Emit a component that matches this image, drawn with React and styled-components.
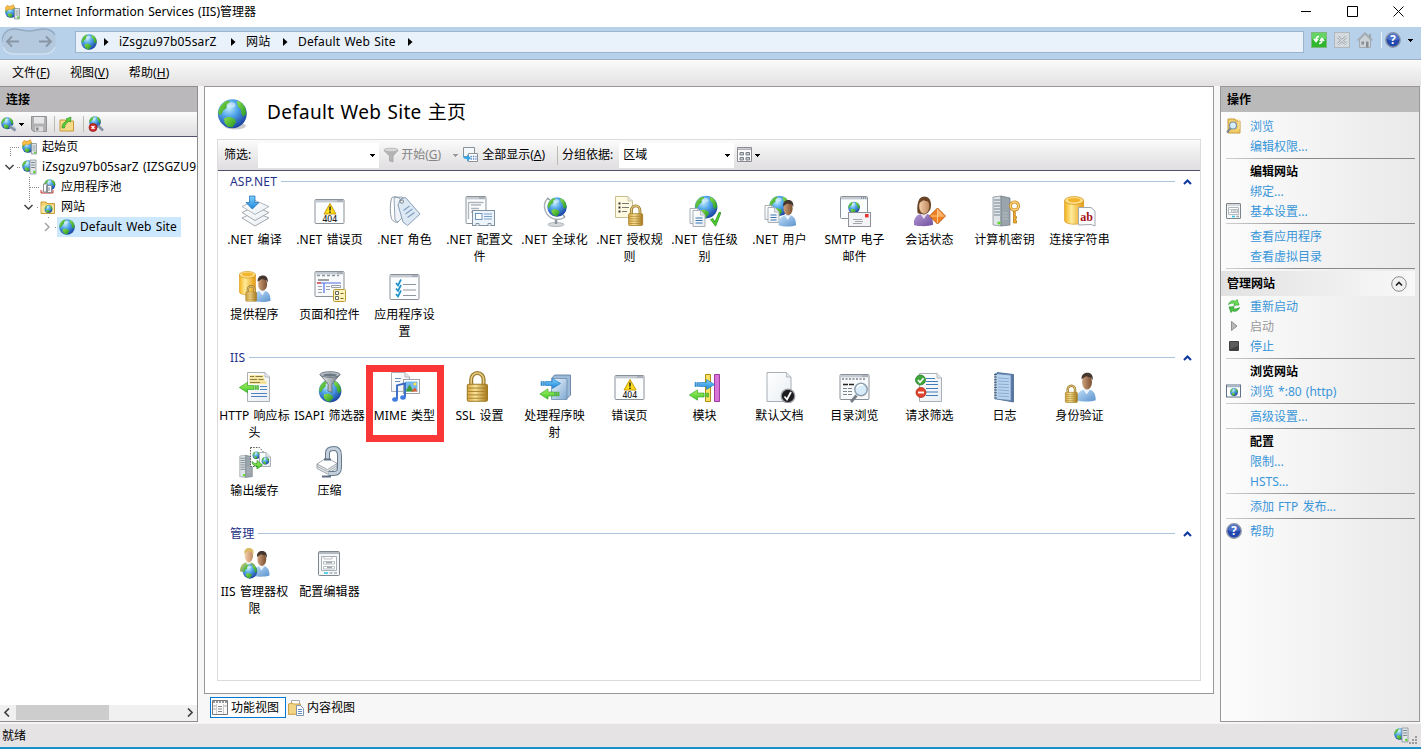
import styled, { createGlobalStyle } from "styled-components"

const GlobalStyle = createGlobalStyle`
    * { box-sizing: border-box; }
    html, body, #root { height: 100%; }
    body {
        margin: 0;
        overflow: hidden;
        background: #f7f7f7;
        color: #000;
        font: 12px/20px "Noto Sans", "Noto Sans CJK SC", sans-serif;
        word-spacing: 1px;
        white-space: nowrap;
        cursor: default;
    }
    svg { display: block; flex: none; }
`

// SHARED DRAWING PARTS
const Defs = () => (
    <svg width="0" height="0">
        <defs>
            <radialGradient id="sea" cx="38%" cy="30%" r="75%">
                <stop offset="0" stopColor="#c4edfd" />
                <stop offset=".4" stopColor="#52a6ea" />
                <stop offset="1" stopColor="#163c9c" />
            </radialGradient>
            <linearGradient id="land" x1="0" y1="0" x2="1" y2="1">
                <stop offset="0" stopColor="#8fe04a" />
                <stop offset="1" stopColor="#1f9425" />
            </linearGradient>
            <linearGradient id="gold">
                <stop offset="0" stopColor="#d9aa45" />
                <stop offset=".4" stopColor="#f8e29a" />
                <stop offset="1" stopColor="#a8781b" />
            </linearGradient>
            <linearGradient id="tank">
                <stop offset="0" stopColor="#f3b21c" />
                <stop offset=".35" stopColor="#ffeb9a" />
                <stop offset="1" stopColor="#e69a0c" />
            </linearGradient>
            <linearGradient id="blueShirt" x1="0" y1="0" x2="1" y2="1">
                <stop offset="0" stopColor="#c2e0f9" />
                <stop offset="1" stopColor="#5b93cd" />
            </linearGradient>
            <linearGradient id="skin">
                <stop offset="0" stopColor="#cfa27c" />
                <stop offset="1" stopColor="#7a4f30" />
            </linearGradient>
            <linearGradient id="fair">
                <stop offset="0" stopColor="#f3d0ac" />
                <stop offset="1" stopColor="#c08a60" />
            </linearGradient>
            <linearGradient id="purple" x1="0" y1="0" x2="1" y2="1">
                <stop offset="0" stopColor="#b79ad6" />
                <stop offset="1" stopColor="#6f519f" />
            </linearGradient>
            <linearGradient id="greenShirt" x1="0" y1="0" x2="1" y2="1">
                <stop offset="0" stopColor="#b5d385" />
                <stop offset="1" stopColor="#5d8a35" />
            </linearGradient>
            <linearGradient id="steel">
                <stop offset="0" stopColor="#f2f5f7" />
                <stop offset="1" stopColor="#6d7780" />
            </linearGradient>
            <linearGradient id="paper" x1="0" y1="0" x2="1" y2="1">
                <stop offset="0" stopColor="#fff" />
                <stop offset="1" stopColor="#e9eef3" />
            </linearGradient>
            <linearGradient id="arrowBlue" x1="0" y1="0" x2="0" y2="1">
                <stop offset="0" stopColor="#7fd0fb" />
                <stop offset="1" stopColor="#1c86da" />
            </linearGradient>
            <linearGradient id="arrowGreen" x1="0" y1="0" x2="0" y2="1">
                <stop offset="0" stopColor="#a4ef62" />
                <stop offset="1" stopColor="#43c92c" />
            </linearGradient>
            <linearGradient id="box" x1="0" y1="0" x2="1" y2="1">
                <stop offset="0" stopColor="#eef6fc" />
                <stop offset="1" stopColor="#7fa9d2" />
            </linearGradient>
        </defs>
    </svg>
)

const At = ({ x = 0, y = 0, s = 1, children }) => (
    <g transform={`translate(${x} ${y}) scale(${s})`}>{children}</g>
)

// unit globe, 16 wide
const GlobeShape = () => (
    <>
        <circle cx="8" cy="8" r="7.8" fill="url(#sea)" />
        <path d="M1.6 3.8 4 1.3 6.4.8 6.6 2 5 3.2 4.8 5 3 6.2 2.4 8 1 8.8.4 7z" fill="url(#land)" />
        <path d="M10.4 1 12.8 1.8 15 4.6 15.6 8 14 9.6 12.9 8 12.6 5.6 11 4z" fill="url(#land)" />
        <path d="M3.6 10.4 6.6 9.6 9.6 11 10 12.6 8 15.4 5.4 14.8 3.8 12.8z" fill="url(#land)" />
        <ellipse cx="7.4" cy="3.2" rx="2.4" ry="1.4" fill="#fff" opacity=".45" />
    </>
)

const PadlockShape = () => (
    <>
        <path d="M4 9V5.5a4 4.2 0 0 1 8 0V9" fill="none" stroke="#9b7a2c" strokeWidth="2.6" />
        <path d="M4 9V5.5a4 4.2 0 0 1 8 0V9" fill="none" stroke="#e6cf86" strokeWidth="1" />
        <rect x="1.5" y="8.5" width="13" height="11" rx="1" fill="url(#gold)" stroke="#a07a22" strokeWidth=".7" />
        <path d="M2 11h12M2 13.2h12M2 15.4h12M2 17.6h12" stroke="#a87f25" strokeWidth=".6" />
    </>
)

// bust, 17 wide and 26 high
const PersonShape = ({ shirt = "blueShirt", face = "skin", hair = "#453630", long }) => (
    <>
        <path d="M0 25c0-6 3-9 7-9.6h4c4 .6 6 3.6 6 9.6-4 1.6-13 1.6-17 0z" fill={`url(#${shirt})`} />
        <path d="m6 15.5 3 4.5 3-4.5z" fill="#fff" opacity=".8" />
        {long && <path d="M3.6 15C2.6 9 3.6 1 9 .6c6 0 7 6 5.8 10.4-1 3-4 5-6 5z" fill={hair} />}
        <ellipse cx="9.3" cy="8.8" rx="4.4" ry="6.6" fill={`url(#${face})`} />
        <path d="M4.5 6.5C4.2 2.6 6.4.6 9.6.6c3.4 0 5.2 2.2 4.8 6.8L12.9 5 8.5 3.8z" fill={hair} />
    </>
)

const WindowShape = ({ w = 30, h = 25, fill = "#fcfdfe" }) => (
    <>
        <rect x=".5" y=".5" width={w - 1} height={h - 1} rx="1" fill={fill} stroke="#8b9198" />
        <path d={`M1 2.2H${w - 1}`} stroke="#c3cad1" strokeWidth="2.4" />
        <path d={`M${w - 7} 2h5`} stroke="#5d6670" strokeWidth="1" strokeDasharray="1 1" />
    </>
)

const PageShape = ({ w = 18, h = 24, lines = 0, fill = "url(#paper)", stroke = "#a9afb5", ink = "#3b76b5" }) => (
    <>
        <path d={`M.5.5H${w - 5}L${w - .5} 5V${h - .5}H.5z`} fill={fill} stroke={stroke} />
        <path d={`M${w - 5} .5V5H${w - .5}`} fill="#e4e8ec" stroke={stroke} strokeWidth=".8" />
        {Array.from({ length: lines }, (_, i) => (
            <path key={i} d={`M3 ${8 + i * 2.5}H${w - 3}`} stroke={ink} strokeWidth="1" />
        ))}
    </>
)

const TankShape = () => (
    <>
        <path d="M1 5v20c0 5 19 5 19 0V5z" fill="url(#tank)" stroke="#d08c10" strokeWidth=".6" />
        <ellipse cx="10.5" cy="5" rx="9.5" ry="3.9" fill="#ffe08a" stroke="#d08c10" strokeWidth=".7" />
        <ellipse cx="10.5" cy="4.6" rx="6.5" ry="2.2" fill="#f3b52e" />
    </>
)

const ServerShape = () => (
    <>
        <path d="M1 2 9 1 9 31 1 30z" fill="#dfe5e9" stroke="#7b858d" strokeWidth=".7" />
        <path d="M9 1 18 3V30L9 31z" fill="#9aa4ac" stroke="#6b757d" strokeWidth=".7" />
        <path d="M2 5h6M2 8h6M2 11h6M2 14h6M2 17h6M2 20h6" stroke="#77838c" strokeWidth="1.2" />
        <path d="M11 18h5M11 21h5M11 24h5" stroke="#d5dbdf" strokeWidth=".8" strokeDasharray="1 .7" />
        <circle cx="7" cy="28" r="1.6" fill="#5ddc27" />
    </>
)

const ArrowRight = () => (
    <path d="M4.5 3.5h7V.5l8 5-8 5v-3h-7zM0 3.5h1.2v4H0zM2.2 3.5h1.2v4H2.2z" fill="url(#arrowBlue)" stroke="#1273c0" strokeWidth=".6" />
)
const ArrowLeft = () => (
    <path d="M15 3.5H8.5V.3L.3 5.5l8.2 5.2V7.5H15zM19.5 3.5h-1.2v4h1.2zM17.3 3.5h-1.2v4h1.2z" fill="url(#arrowGreen)" stroke="#2fa022" strokeWidth=".6" />
)

const Warning404 = () => (
    <>
        <At x={.5} y={4}><WindowShape /></At>
        <path d="M16 8.5 22 19H10z" fill="#ffdc1c" stroke="#c79a08" strokeWidth="1" strokeLinejoin="round" />
        <path d="M16 11.5v4M16 16.6v1.4" stroke="#222" strokeWidth="1.5" />
        <text x="15.8" y="27" textAnchor="middle" fontSize="8.5" fontWeight="500" fill="#222">404</text>
    </>
)

// FEATURE DRAWINGS, 32 x 32
const drawings = {
    compile: (
        <>
            <path d="m3 23 13-6 14 6-14 8z" fill="url(#paper)" stroke="#8d949b" strokeWidth=".8" />
            <path d="m3 17.5 13-6 14 6-14 8z" fill="url(#paper)" stroke="#8d949b" strokeWidth=".8" />
            <path d="m3 11.5 13-6 14 6-14 8z" fill="url(#paper)" stroke="#9da4ab" strokeWidth=".8" />
            <path d="M10.5 1h5.5v6.5h4L13.3 14 7 7.5h3.5z" fill="url(#arrowBlue)" stroke="#1268b5" strokeWidth=".7" />
        </>
    ),
    error: <Warning404 />,
    roles: (
        <>
            <path d="M3 2.5C1 6 .5 20 3 24.5c1 2 4 3 6 3" fill="none" stroke="#8a98a6" strokeWidth="1" />
            <path d="m5 2.5 8-.5 6 4-5 16-5 5-3-2z" fill="#eef4fa" stroke="#8a9bad" strokeWidth=".9" />
            <path d="m9 10 2.5-6 5-1.5L31 19 18.5 30.5 14 27z" fill="#dce9f5" stroke="#7e93a9" strokeWidth=".9" />
            <path d="m14.5 15.5 6-4.5M16.5 19l7-5M18.5 22.5l7-5" stroke="#7d9dbd" strokeWidth="1.1" />
            <circle cx="12.8" cy="6.5" r="1.7" fill="#fff" stroke="#566" strokeWidth=".8" />
            <path d="M3 2.5c4-2 8 0 10 4" fill="none" stroke="#8a98a6" strokeWidth=".9" />
        </>
    ),
    config: (
        <>
            <At x={1.5} y={1}><WindowShape w={21} h={28} /></At>
            <path d="M4.5 7.5h15M4.5 7v17M7 10h10M7 13.5h8M7 17h3" stroke="#adb5bc" strokeWidth="1.3" />
            <rect x="8.5" y="15.5" width="22" height="15" fill="#edf4fb" stroke="#8292a3" />
            <rect x="11.5" y="18.5" width="6.5" height="6" fill="#fff" stroke="#6894c4" />
            <path d="M20 19h8M20 21.5h8M20 24h8" stroke="#79a0ca" />
            <path d="M12 30.5v-2h3v2m9 0v-2h3v2" fill="#fff" stroke="#8292a3" />
        </>
    ),
    globalize: (
        <>
            <ellipse cx="17" cy="29.5" rx="8" ry="2" fill="#d5dade" stroke="#8b949b" strokeWidth=".6" />
            <path d="M17 24v5" stroke="#8b949b" strokeWidth="2.4" />
            <path d="M9 3C2 10 6 24 19 24.5c3 0 5-1 7-2.5" fill="none" stroke="#a9b2b9" strokeWidth="1.4" />
            <path d="m8 3 3 2M26 22l-2-2" stroke="#8b949b" strokeWidth="1.4" />
            <At x={8} y={2} s={1.25}><GlobeShape /></At>
        </>
    ),
    authorize: (
        <>
            <At x={1} y={1}><PageShape w={18} h={22} fill="#fff9e0" stroke="#c9bd95" /></At>
            <path d="M4.5 8.5h2M4.5 12.5h2M4.5 16.5h2" stroke="#333" strokeWidth="1.8" />
            <path d="M8 8.5h7M8 12.5h7M8 16.5h5" stroke="#787878" strokeWidth="1.2" />
            <At x={13} y={9.5} s={1.08}><PadlockShape /></At>
        </>
    ),
    trust: (
        <>
            <At x={5.5} y={.5} s={1.45}><GlobeShape /></At>
            <At x={.5} y={13}><PageShape w={13} h={16} /></At>
            <At x={3.5} y={15}><PageShape w={13} h={17} lines={3} /></At>
            <path d="m21.5 24.5 2.5-1 1.8 3.6L30 17.4l2 .2L26.6 31.200z" fill="#4bd02c" stroke="#238915" strokeWidth=".7" />
        </>
    ),
    users: (
        <>
            <At x={5} y={.5} s={1.3}><GlobeShape /></At>
            <At x={.5} y={10}><PageShape w={12} h={15} /></At>
            <At x={3.5} y={12}><PageShape w={12} h={16} lines={3} /></At>
            <At x={14.5} y={4.5} s={1.03}><PersonShape /></At>
        </>
    ),
    smtp: (
        <>
            <At x={1} y={1}><WindowShape w={28} h={23} /></At>
            <At x={9} y={6.5} s={.75}><GlobeShape /></At>
            <rect x="9.5" y="17.5" width="22" height="14" fill="#f4f4f6" stroke="#8e9297" />
            <rect x="26" y="19" width="3.6" height="3.4" fill="#e43434" />
            <path d="M14 24.5h9M16 26.5h8M14 28.5h9" stroke="#a2a6ab" />
        </>
    ),
    session: (
        <>
            <At x={-.5} y={1} s={1.15}><PersonShape shirt="purple" face="fair" hair="#6b4426" long /></At>
            <path d="m23.5 13 8 8-8 8-8-8z" fill="#f08120" stroke="#b4560b" strokeWidth=".9" />
            <path d="M23.5 14v14M16.5 21h14" stroke="#ffd09a" strokeWidth=".9" />
            <path d="m24 14.5 6 6h-6z" fill="#ffb469" />
        </>
    ),
    machineKey: (
        <>
            <At x={3} y={0}><ServerShape /></At>
            <path d="M24.5 15v13h3v-2.4h-1.2v-2h1.2v-2h-1.2V15z" fill="#f0ae35" stroke="#b97b13" strokeWidth=".8" />
            <circle cx="25.5" cy="11" r="4" fill="none" stroke="#c98a1c" strokeWidth="3" />
            <circle cx="25.5" cy="11" r="4" fill="none" stroke="#ffd680" strokeWidth="1.4" />
        </>
    ),
    connString: (
        <>
            <At x={-.4} y={.5}><TankShape /></At>
            <path d="M14.5 12.5h12.5l4 3.5v15l-4-1.5-12.5.5z" fill="#fff" stroke="#a3a8ad" />
            <text x="22.5" y="25.5" textAnchor="middle" fontSize="12" fontWeight="700" fontFamily="Liberation Serif, serif" fill="#a51218">ab</text>
        </>
    ),
    providers: (
        <>
            <At x={-.5} y={.5} s={.85}><TankShape /></At>
            <At x={14} y={5} s={1.03}><PersonShape /></At>
            <At x={5.5} y={15} s={.83}><PadlockShape /></At>
        </>
    ),
    pages: (
        <>
            <At x={.5} y={1}><WindowShape h={26} fill="#f8fafc" /></At>
            <path d="M3 5.5h22" stroke="#8c9299" strokeDasharray="3 2" strokeWidth="1.6" />
            <path d="M4 10h11" stroke="#444" />
            <path d="M3 13h24M10 13v10" stroke="#4e6ee0" strokeWidth="1.2" />
            <path d="M3 13h4" stroke="#f04a3c" strokeWidth="1.4" />
            <path d="M4 16.5h4M4 19.5h4M4 22.5h4M12 16.5h4M12 19.5h4M17.5 15.5h9v2h-9z" fill="none" stroke="#9aa1a8" />
            <rect x="19.5" y="19.5" width="12" height="12" rx="1" fill="#fff3bd" stroke="#b99a32" />
            <path d="M21.5 21.5h3v3h-3zM21.5 26.5h3v3h-3z" fill="#fff" stroke="#555" strokeWidth=".9" />
            <path d="M26.5 23.5h3M26.5 28.5h3" stroke="#776320" />
        </>
    ),
    appSettings: (
        <>
            <At x={.5} y={4}><WindowShape h={26} /></At>
            <path d="M14 14.5h13M14 20h13M14 25.5h13" stroke="#8d959d" strokeWidth="1.2" />
            <path d="m7 13 2 2.4L12 9.5M7 18.5l2 2.4 3-5.9M7 24l2 2.4 3-5.9" fill="none" stroke="#1f92c9" strokeWidth="1.7" />
        </>
    ),
    headers: (
        <>
            <At x={8} y={1}><PageShape w={23} h={30} /></At>
            <path d="M10.5 5.5h14M10.5 8.5h15M10.5 11.5h17" stroke="#f3de84" strokeWidth="2.6" />
            <path d="M11 5.5h4M16.5 5.5h7M11 8.5h7M19.5 8.5h5M11 11.5h10" stroke="#6e6432" strokeWidth=".8" />
            <path d="M21 15.5h7M21 18.5h7M12 22.5h16M12 25.5h16" stroke="#4e83bd" strokeWidth="1" />
            <At x={0} y={11}><ArrowLeft /></At>
        </>
    ),
    isapi: (
        <>
            <At x={4.5} y={8.5} s={1.45}><GlobeShape /></At>
            <path d="M6 3.5 14 13v7l4 1.5V13l8-9.5z" fill="url(#steel)" stroke="#59636d" strokeWidth=".8" />
            <ellipse cx="16" cy="3.5" rx="10" ry="2.8" fill="#b9c2ca" stroke="#59636d" strokeWidth=".8" />
            <ellipse cx="16" cy="4" rx="7" ry="1.5" fill="#6c7781" />
        </>
    ),
    mime: (
        <>
            <At x={2} y={1}><PageShape w={19} h={20} /></At>
            <path d="M6 7.5h6M6 10.5h5" stroke="#6f90b2" />
            <rect x="14.5" y="8.500" width="16" height="14" fill="#fff" stroke="#9da3a9" />
            <rect x="16.5" y="10.5" width="12" height="10" fill="#74b9ee" />
            <path d="m16.5 20.5 4-7 4 7z" fill="#3d9a36" />
            <path d="m22 20.5 4-4 2.5 4z" fill="#e05b2b" />
            <circle cx="26" cy="13" r="1.6" fill="#ffe14b" />
            <path d="M8 28V14.5l8-2V26" fill="none" stroke="#2f63c4" strokeWidth="1.8" />
            <ellipse cx="6" cy="28.5" rx="2.8" ry="2.2" fill="#3f7de0" />
            <ellipse cx="14" cy="26.5" rx="2.8" ry="2.2" fill="#3f7de0" />
        </>
    ),
    ssl: <At x={1} y={0} s={1.55}><PadlockShape /></At>,
    handler: (
        <>
            <path d="m12.5 7.5 3-3.5h16v20l-4 4z" fill="#9dbbd9" stroke="#54779b" strokeWidth=".8" />
            <path d="M12.5 7.5H28v21H12.500z" fill="url(#box)" stroke="#6d8eb1" strokeWidth=".8" />
            <At x={2} y={7}><ArrowRight /></At>
            <At x={.5} y={17.5}><ArrowLeft /></At>
        </>
    ),
    modules: (
        <>
            <path d="M16.5 3.5h5v27h-5z" fill="#f7e263" stroke="#b08f12" />
            <path d="M25.5 3.5h5v27h-5z" fill="#d873d8" stroke="#9c3ba0" />
            <At x={6} y={8}><ArrowRight /></At>
            <At x={0} y={18.5}><ArrowLeft /></At>
        </>
    ),
    defaultDoc: (
        <>
            <At x={2.5} y={1}><PageShape w={25} h={30} /></At>
            <circle cx="24" cy="25" r="6.8" fill="#1d1d1f" stroke="#9a9da0" strokeWidth="1.3" />
            <path d="m20.5 25.5 2.5 3 4-7.5" fill="none" stroke="#fff" strokeWidth="1.8" />
        </>
    ),
    browse: (
        <>
            <At x={.5} y={3}><WindowShape h={26} fill="#f8f9fa" /></At>
            <path d="M3 8h24" stroke="#7b8289" strokeDasharray="2 1.5" strokeWidth="1.4" />
            <path d="M4 13.5h12" stroke="#222" strokeWidth="1.6" strokeDasharray="5 1" />
            <path d="M4 17.5h9M4 20.5h9M4 23.5h9" stroke="#7e858c" strokeDasharray="4 1" />
            <path d="m17.5 24.5-5.5 6.5" stroke="#777e85" strokeWidth="2.8" />
            <circle cx="22" cy="18.5" r="6.2" fill="#d6ecfb" stroke="#8fa0b0" strokeWidth="1.5" />
            <path d="M18 17a4.5 4.5 0 0 1 6-3" fill="none" stroke="#fff" strokeWidth="1.5" />
        </>
    ),
    filter: (
        <>
            <At x={5} y={2}><PageShape w={23} h={29} /></At>
            <path d="M12 7.5h9M12 10.5h12M12 13.5h12M12 17.5h12M12 21h12M12 24.5h12" stroke="#3f7dbd" strokeWidth="1.1" />
            <circle cx="6.5" cy="9" r="5" fill="#3fa63c" stroke="#237322" strokeWidth=".7" />
            <path d="m4 9 2 2.2 3.5-4" fill="none" stroke="#fff" strokeWidth="1.6" />
            <circle cx="7" cy="21.5" r="5" fill="#e2412b" stroke="#9f2414" strokeWidth=".7" />
            <path d="M4 21.5h6" stroke="#fff" strokeWidth="1.9" />
        </>
    ),
    log: (
        <>
            <path d="m8 1.5 16.5 2v27.5L8 28z" fill="#5577a3" stroke="#466690" strokeWidth=".8" />
            <path d="m6 2.5 16 1.5v25.5L6 28z" fill="#b9d2ee" stroke="#6487ae" strokeWidth=".8" />
            <path d="m9 7 11 .7M9 10l11 .7M9 13l11 .7M9 16l11 .7M9 19l11 .7M9 22l11 .7M9 25l11 .7" stroke="#86a9d0" strokeWidth=".9" />
            <path d="M6.5 3v24.5" stroke="#44556a" strokeWidth="2.6" strokeDasharray="1 1.6" />
        </>
    ),
    auth: (
        <>
            <At x={12.5} y={1} s={1.13}><PersonShape /></At>
            <At x={0} y={13.5} s={.92}><PadlockShape /></At>
        </>
    ),
    cache: (
        <>
            <At x={0} y={8.5} s={.74}><ServerShape /></At>
            <path d="M11.5 1.5h9l3.5 4v15H11.500z" fill="#fff" stroke="#555" strokeDasharray="1.5 1.2" />
            <At x={13.5} y={5.5} s={.48}><GlobeShape /></At>
            <At x={20} y={6}><PageShape w={12} h={15} /></At>
            <At x={22.5} y={11} s={.48}><GlobeShape /></At>
            <path d="M13 15.5c2 2 3 2 5 2v-3l5.5 4.5-5.5 4v-3c-3 0-5-1.500-5-4.500z" fill="url(#arrowGreen)" stroke="#258c1b" strokeWidth=".7" />
        </>
    ),
    compress: (
        <>
            <path d="M3 18v4.5L13.500 28 23 22v-4.500z" fill="#e3e7ea" stroke="#8e969d" strokeWidth=".8" />
            <path d="m3 20.200 10.500 5.500 9.500-6" fill="none" stroke="#8e969d" strokeWidth=".7" />
            <path d="m3 18 10-6.500 10 6-9.500 6z" fill="#fff" stroke="#8e969d" strokeWidth=".8" />
            <path d="M13.500 13V7c0-3.500 3-4.500 6.500-4.500 4.500 0 5.500 3 5.500 7V21c0 5-2 6.500-6 6.500h-5" fill="none" stroke="#65788c" strokeWidth="5" />
            <path d="M13.500 13V7c0-3.500 3-4.500 6.500-4.500 4.500 0 5.500 3 5.500 7V21c0 5-2 6.500-6 6.500h-5" fill="none" stroke="#c3d0dc" strokeWidth="3" />
            <path d="M10 13.500h7M8 30.500h9" stroke="#5f6f80" strokeWidth="2" />
        </>
    ),
    permissions: (
        <>
            <At x={1} y={.5} s={.95}><PersonShape shirt="greenShirt" face="fair" hair="#dcbc62" /></At>
            <At x={13.5} y={3.5} s={1}><PersonShape /></At>
            <At x={3.5} y={17} s={.93}><GlobeShape /></At>
        </>
    ),
    editor: (
        <>
            <rect x="4.5" y="4.5" width="21" height="24" rx="1" fill="#f6f7f8" stroke="#7f868d" />
            <path d="M5 6h20" stroke="#b3bac0" strokeWidth="2" />
            <path d="M7.5 9.5h15v14h-15z" fill="#fff" stroke="#a7aeb5" />
            <path d="M10 9.500v2.500h8V9.500M9.500 14.500h11V17h-11zM9.500 19.500h11V22h-11z" fill="none" stroke="#b7bdc3" />
            <path d="M12 15.700h6M13 20.700h5" stroke="#8a9198" />
            <path d="M10 26h4" stroke="#2bc4e8" strokeWidth="1.5" />
            <path d="M15.500 26h3M20 26h3" stroke="#a7aeb5" strokeWidth="1.5" />
        </>
    ),
}

// SMALL DRAWINGS, 16 x 16
const smallDrawings = {
    globe: <GlobeShape />,
    start: (
        <>
            <At x={0} y={2} s={.75}><GlobeShape /></At>
            <path d="m0 4.500 2-3L5 2.500 8.500.8 9.500 4l-3 1.500L3.500 5 2 7z" fill="#fbc04a" stroke="#cf8a1a" strokeWidth=".6" />
            <path d="M9.500 4.500h5V15h-5z" fill="#dfe4e7" stroke="#87929a" strokeWidth=".8" />
            <path d="M10.500 7h3M10.500 9h3M10.500 11h3" stroke="#87929a" strokeWidth=".8" />
            <circle cx="13" cy="13.500" r="1" fill="#53d32a" />
        </>
    ),
    server: (
        <>
            <At x={0} y={1} s={.75}><GlobeShape /></At>
            <path d="M8 1h6v14H8z" fill="#e2e7ea" stroke="#87929a" strokeWidth=".8" />
            <path d="M9.200 3.500h3.600M9.200 6h3.600M9.200 8.500h3.600" stroke="#76818a" />
            <circle cx="12.300" cy="13" r="1.200" fill="#53d32a" />
        </>
    ),
    pool: (
        <>
            <At x={4} y={0} s={.72}><GlobeShape /></At>
            <path d="M1 11v3h12v-3" fill="#f6dcdc" stroke="#c33c34" />
            <path d="M3.500 5h4v8h-4zM6.500 6.500h5v7h-5z" fill="#fff" stroke="#7d858c" strokeWidth=".9" />
            <path d="M8 9h2M8 11h2" stroke="#7d858c" />
        </>
    ),
    sites: (
        <>
            <path d="M1 3h5l1 1.500h7.500v10H1z" fill="#f6d169" stroke="#c09632" strokeWidth=".9" />
            <path d="M1.500 6.500H14V14H1.500z" fill="#fbe6a0" />
            <At x={4.5} y={6} s={.5}><GlobeShape /></At>
        </>
    ),
    connect: (
        <>
            <At x={0} y={1} s={.78}><GlobeShape /></At>
            <path d="m9 10 5.500 4.500" stroke="#8796a6" strokeWidth="3" />
            <path d="m11 9.500 4 3" stroke="#c5d2de" strokeWidth="1.500" />
        </>
    ),
    save: (
        <>
            <path d="M.5.5h15v15H2.500l-2-2z" fill="#b1b1b3" stroke="#949497" />
            <path d="M3 1h10v6.500H3z" fill="#e6e6e8" />
            <path d="M4 10.500h8v5H4z" fill="#dcdcde" />
            <path d="M5 11.500h2.500v3H5z" fill="#89898c" />
        </>
    ),
    up: (
        <>
            <path d="M1 4h5l1 1h7.500v10H1z" fill="#f6da8a" stroke="#c79a3a" />
            <path d="M3 12c0-4 2-6 5-7L7 3l5-2-.5 5L10 5C8 7 6 8 5.500 12z" fill="#5ad13b" stroke="#238a1a" strokeWidth=".6" />
        </>
    ),
    disconnect: (
        <>
            <At x={1} y={0} s={.75}><GlobeShape /></At>
            <path d="m10 9.500 5 5" stroke="#8796a6" strokeWidth="2.600" />
            <circle cx="5" cy="11.500" r="4" fill="#d02a2a" stroke="#8d1212" strokeWidth=".7" />
            <path d="m3.500 10 3 3m0-3-3 3" stroke="#fff" strokeWidth="1.300" />
        </>
    ),
    refresh: (
        <>
            <rect x=".5" y=".5" width="15" height="15" fill="#2eb62e" stroke="#7fb87f" />
            <path d="M1 1h14v6H1z" fill="#64d464" />
            <path d="M8 4.500C5.500 4.500 5 6 5 8.500M2.800 7 5 9.500 7.200 7M8 11.500c2.500 0 3-1.500 3-4M8.800 9 11 6.500 13.200 9" fill="none" stroke="#fff" strokeWidth="1.500" />
        </>
    ),
    stopLoad: (
        <>
            <rect x=".5" y=".5" width="15" height="15" fill="#d3dade" stroke="#b0b8bd" />
            <path d="m4 5 8 7m0-7-8 7" stroke="#a2a9ae" strokeWidth="2.600" />
            <path d="m4 5 8 7m0-7-8 7" stroke="#eef1f3" />
        </>
    ),
    home: (
        <>
            <path d="M12 2h2v4h-2z" fill="#9fa6ab" />
            <path d="M2.500 8 8 2.500 13.500 8v7.500h-11z" fill="#ccd2d6" stroke="#a4abb0" />
            <path d="M.5 8.500 8 1l7.500 7.500" fill="none" stroke="#a0a7ac" strokeWidth="1.400" />
            <path d="M4.500 9.500H7v3H4.500zM9 9.500h2.500v6H9z" fill="#858d93" />
        </>
    ),
    help: (
        <>
            <circle cx="8" cy="8" r="7.200" fill="#2448ae" stroke="#8b93a5" strokeWidth="1.400" />
            <path d="M2 7a6 6 0 0 1 12 0c-4 2-8 2-12 0z" fill="#6f93e2" opacity=".55" />
            <text x="8" y="12.200" textAnchor="middle" fontSize="11.500" fontWeight="700" fill="#fff">?</text>
        </>
    ),
    funnel: (
        <>
            <path d="M1 3.500 6.500 9v5l3.500 1V9l5-5.500z" fill="#b5b5b5" stroke="#a2a2a2" strokeWidth=".7" />
            <ellipse cx="8" cy="3" rx="7" ry="1.800" fill="#d8d8d8" stroke="#a8a8a8" strokeWidth=".7" />
        </>
    ),
    showAll: (
        <>
            <path d="M1.500.5h11v9h-11z" fill="#f5f8fa" stroke="#8a9197" />
            <path d="M6.500 6.500h9v8h-9z" fill="#fff" stroke="#8a9197" />
            <path d="M8.500 9.500h6M8.500 12h6" stroke="#5b83c9" strokeDasharray="1.400 1" strokeWidth="1.400" />
            <path d="M1 8c0 3 1 4 4 4v2.500L9 11 5 7.500V10c-2 0-3-.5-4-2z" fill="#35a5e4" />
        </>
    ),
    views: (
        <>
            <path d="M.5.5h14v14H.5z" fill="#fdfdfd" stroke="#8a8a92" />
            <path d="M1 2.200h13" stroke="#b0b0b8" strokeWidth="1.600" />
            <path d="M3 5.500h3.500V8H3zM9 5.500h3.500V8H9zM3 10.500h3.500V13H3zM9 10.500h3.500V13H9z" fill="#c4d2c4" stroke="#7d7d90" />
        </>
    ),
    explore: (
        <>
            <path d="M2 1h7l1 2h4v12H2z" fill="#f2cd68" stroke="#c59b3b" />
            <path d="M10 1.500h3v10" fill="none" stroke="#fff0b5" />
            <circle cx="7" cy="7.500" r="3.500" fill="#d8eefb" stroke="#7c93a8" strokeWidth="1.200" />
            <path d="M4.500 10.500 1 14.500" stroke="#7c8792" strokeWidth="2" />
        </>
    ),
    settings: (
        <>
            <rect x=".5" y=".5" width="14" height="15" rx=".5" fill="#f7f8f8" stroke="#7d848b" />
            <path d="M1 2h13" stroke="#b5bcc2" />
            <path d="M2.500 4.500h10v7h-10zM5.500 6.500h6v3h-6z" fill="#fff" stroke="#b3b9bf" />
            <path d="M3.500 6.500h1M3.500 9.500h1M6.500 8h4" stroke="#9ba2a9" />
            <path d="M6 13.500h3" stroke="#29c3ea" strokeWidth="1.500" />
            <path d="M10.500 13.500H13" stroke="#9ba2a9" strokeWidth="1.500" />
        </>
    ),
    restart: (
        <>
            <path d="M2.500 6.500C3.500 3 7 1.800 9.500 3.300L11 1.500l2 5.500-5.300.3 1.300-1.700C7 4.700 4.500 5 2.500 6.500z" fill="#6fdc58" stroke="#2aa32c" strokeWidth=".7" />
            <path d="M13.500 9.500c-1 3.500-4.500 4.700-7 3.200L5 14.500 3 9l5.300-.3L7 10.400c2 .9 4.500.6 6.500-.9z" fill="#4cc244" stroke="#239428" strokeWidth=".7" />
        </>
    ),
    play: <path d="M5.500 3.500v9L11 8z" fill="#b9b9b9" stroke="#8f8f8f" />,
    stop: (
        <>
            <rect x="3" y="3" width="10" height="10" rx="1" fill="#404040" />
            <path d="M4 4h8v4l-8 3z" fill="#5c5c5c" />
        </>
    ),
    browser: (
        <>
            <rect x=".5" y="2" width="14" height="12" fill="#fff" stroke="#5f7288" />
            <path d="M1 3.500h13" stroke="#a5b5c6" strokeWidth="1.500" />
            <At x={4} y={5} s={.5}><GlobeShape /></At>
        </>
    ),
    featuresView: (
        <>
            <path d="M.5.5h15v14H.5z" fill="#fafafa" stroke="#777" />
            <path d="M1 2h14" stroke="#999" strokeWidth="2" strokeDasharray="2 1" />
            <path d="M4.500 4v10M11.500 4v10" stroke="#ccc" />
            <path d="M1.500 6h2M1.500 9h2M6 6.500h4M6 9h4M6 11.500h4M12.500 6h2" stroke="#888" />
        </>
    ),
    contentView: (
        <>
            <path d="M3.500.5h8v6h-8z" fill="#fff" stroke="#aaa" />
            <path d="m.5 4 4-1 1 1h7v10l-12 .5z" fill="#f3d483" stroke="#c9a04a" />
            <path d="M8.500 5.500h4l3 3v7h-7z" fill="#fff" stroke="#7f95ae" />
            <path d="M10 9.500h4M10 11.500h4M10 13.500h4" stroke="#5f8fc4" />
        </>
    ),
}

const Small = ({ name, size = 16 }) => <svg width={size} height={size} viewBox="0 0 16 16">{smallDrawings[name]}</svg>

const Caret = ({ color = "#000" }) => (
    <svg width="5" height="3" viewBox="0 0 5 3" shapeRendering="crispEdges"><path d="M0 0h5L2.500 3z" fill={color} /></svg>
)
const Crumb = () => <svg width="5" height="8" viewBox="0 0 5 8"><path d="M0 0v8l4.500-4z" fill="#000" /></svg>

// fixed space inside a bar
const Gap = styled.i`
    flex: none;
    width: ${p => p.$w}px;
`

// WINDOW FRAME
const Frame = styled.div`
    display: flex;
    flex-direction: column;
    height: 100vh;
`
const TitleBar = styled.header`
    display: flex;
    align-items: center;
    height: 27px;
    padding: 0 17px 4px 5px;
    background: #fff;
`
const Title = styled.span`
    flex: 1;
    margin-left: 5px;
`
const WindowButtons = styled.div`
    display: flex;
    gap: 35px;
`

// ADDRESS BAR
const AddressBar = styled.div`
    display: flex;
    align-items: center;
    height: 33px;
    padding: 0 8px 3px 2px;
    background: #b8d1ea;
    border-bottom: 1px solid #a0b0c3;
`
const Address = styled.div`
    display: flex;
    align-items: center;
    width: 1230px;
    height: 22px;
    margin: 0 7px 0 18px;
    padding-left: 5px;
    background: #e9f1fa;
    border: 1px solid #9db4cd;
`
const Place = styled.span`
    width: ${p => p.$w}px;
    margin: 0 13px 0 10px;
    letter-spacing: .15px;
`
const BarIcons = styled.div`
    display: flex;
    align-items: center;
    gap: 7px;
    padding-bottom: 3px;
`
const BarDivider = styled.i`
    width: 1px;
    height: 16px;
    margin-left: 1px;
    margin-right: -4px;
    background: #eef4fb;
`

// MENU
const MenuBar = styled.nav`
    display: flex;
    gap: 20px;
    height: 26px;
    padding: 3px 12px 0;
    background: linear-gradient(#fbfbfb, #e3e1e2);
    letter-spacing: .1px;
`

// BODY
const Body = styled.main`
    display: flex;
    flex: 1;
    min-height: 0;
    padding: 0 1px 1px 0;
`
const PanelTitle = styled.h2`
    flex: none;
    height: 25px;
    margin: 0;
    padding: 3px 6px 0;
    background: ${p => p.$bg};
    font-size: 12px;
    line-height: 20px;
    font-weight: 700;
`

// CONNECTIONS
const Connections = styled.aside`
    display: flex;
    flex-direction: column;
    width: 198px;
    height: 636px;
    background: #fff;
    border: solid #8e8e90;
    border-width: 1px 1px 1px 0;
`
const ConnectionTools = styled.div`
    display: flex;
    align-items: center;
    height: 25px;
    padding-left: 1px;
    background: linear-gradient(#fbfbfb, #dfdddf);
    border-bottom: 1px solid #50506f;
`
const ToolDivider = styled.i`
    width: 1px;
    height: ${p => p.$h || 16}px;
    margin: 0 4px 0 ${p => p.$ml || 7}px;
    background: #bdbcb0;
`
const Tree = styled.div`
    flex: 1;
    overflow: hidden;
`
const TreeRow = styled.div`
    display: flex;
    align-items: center;
    height: 20px;
`
const TreeLabel = styled.span`
    display: flex;
    align-items: center;
    gap: ${p => p.$gap || 5}px;
    margin-left: ${p => p.$active ? -1 : 1}px;
    padding: 0 ${p => p.$active ? 4 : 0}px 0 ${p => p.$active ? 2 : 0}px;
    background: ${p => p.$active ? "#cce8ff" : "transparent"};
    letter-spacing: .1px;
`
const ScrollBar = styled.div`
    display: flex;
    align-items: center;
    height: 16px;
    padding: 0 4px 1px;
    background: #f0f0f0;
`
const Thumb = styled.i`
    width: 93px;
    height: 15px;
    margin: 0 auto 0 6px;
    background: #cdcdcd;
`

// HOME PANE
const Center = styled.section`
    width: 1010px;
    margin: 0 6px;
`
const Home = styled.div`
    height: 608px;
    padding: 0 12px;
    background: #fff;
    border: 1px solid #98989a;
`
const HomeHead = styled.h1`
    display: flex;
    align-items: center;
    gap: 18px;
    height: 52px;
    margin: 0;
    padding-top: 2px;
    font-size: 19px;
    font-weight: 400;
`
const HeadText = styled.span`
    margin-top: -5px;
    letter-spacing: .3px;
`
const Features = styled.div`
    width: 984px;
    height: 542px;
    border: 1px solid #dcdcdf;
`
const FilterBar = styled.div`
    display: flex;
    align-items: center;
    height: 31px;
    padding-left: 6px;
    background: linear-gradient(#fbfbfb, #dfdddf);
    border-bottom: 1px solid #50506f;
`
const Combo = styled.div`
    display: flex;
    align-items: center;
    justify-content: space-between;
    width: ${p => p.$w}px;
    height: 25px;
    margin-left: ${p => p.$ml}px;
    padding: 0 4px;
    background: #fff;
`
const BarText = styled.span`
    color: ${p => p.$dim ? "#858585" : "#000"};
`

// FEATURE GROUPS
const Group = styled.section`
    height: 176px;
`
const GroupHead = styled.h3`
    display: flex;
    align-items: center;
    gap: 4px;
    height: 22px;
    margin: 0;
    padding: 0 8px 1px 12px;
    color: #1e3287;
    font-size: 12px;
    font-weight: 400;
    letter-spacing: .2px;
`
const Rule = styled.i`
    flex: 1;
    height: 1px;
    margin-right: 4px;
    background: #b0c4de;
`
const Grid = styled.div`
    display: grid;
    grid-template-columns: repeat(12, 75px);
    grid-auto-rows: 75px;
    margin-left: -1px;
`
const Item = styled.div`
    position: relative;
    display: flex;
    flex-direction: column;
    align-items: center;
    padding-top: 2px;
    line-height: 17px;
    text-align: center;
`
const Caption = styled.span`
    margin: 4px -4px 0;
    white-space: pre;
    letter-spacing: .1px;
`
const Highlight = styled.i`
    position: absolute;
    top: -4px;
    left: -1px;
    width: 78px;
    height: 77px;
    border: 7px solid #fb3636;
`

// VIEW TABS
const Tabs = styled.div`
    display: flex;
    padding: 3px 0 0 6px;
`
const Tab = styled.div`
    display: flex;
    align-items: center;
    gap: 3px;
    height: 21px;
    padding: 0 6px 0 1px;
    border: 1px solid ${p => p.$active ? "#0078d7" : "transparent"};
    background: ${p => p.$active ? "#fff" : "transparent"};
`

// ACTIONS
const Actions = styled.aside`
    width: 200px;
    height: 636px;
    background: linear-gradient(90deg, #fcfcfc, #e9e9ea);
    border: 1px solid #98989a;
`
const ActionList = styled.div`
    padding: 4px 4px 0 5px;
`
const Action = styled.div`
    display: flex;
    align-items: center;
    height: 20px;
    padding-top: 2px;
    color: ${p => p.$dim ? "#999" : p.$title ? "#000" : "#3a96d8"};
    font-weight: ${p => p.$title ? 700 : 400};
`
const ActionIcon = styled.span`
    width: 24px;
    margin-top: -2px;
`
const Separator = styled.i`
    display: block;
    height: 5px;
    padding-top: 2px;
    &::before {
        content: "";
        display: block;
        height: 1px;
        background: linear-gradient(90deg, #d0d0d0, #8a8a8a 40%);
    }
`
const SubHead = styled.h3`
    display: flex;
    align-items: center;
    justify-content: space-between;
    height: 25px;
    margin: 0 0 0 -5px;
    padding: 0 8px 0 6px;
    background: linear-gradient(90deg, #e2e2e3, #f8f8f8);
    font-size: 12px;
    font-weight: 700;
`

// STATUS BAR
const StatusBar = styled.footer`
    display: flex;
    align-items: center;
    justify-content: space-between;
    height: 26px;
    padding: 0 3px 0 2px;
    background: #e5e3e4;
    border-top: 1px solid #f3f3f3;
    border-bottom: 2px solid #1b8fc8;
`

const groups = [
    {
        name: "ASP.NET",
        items: [
            ["compile", ".NET 编译"], ["error", ".NET 错误页"], ["roles", ".NET 角色"], ["config", ".NET 配置文\n件"],
            ["globalize", ".NET 全球化"], ["authorize", ".NET 授权规\n则"], ["trust", ".NET 信任级\n别"], ["users", ".NET 用户"],
            ["smtp", "SMTP 电子\n邮件"], ["session", "会话状态"], ["machineKey", "计算机密钥"], ["connString", "连接字符串"],
            ["providers", "提供程序"], ["pages", "页面和控件"], ["appSettings", "应用程序设\n置"],
        ],
    },
    {
        name: "IIS",
        items: [
            ["headers", "HTTP 响应标\n头"], ["isapi", "ISAPI 筛选器"], ["mime", "MIME 类型", true], ["ssl", "SSL 设置"],
            ["handler", "处理程序映\n射"], ["error", "错误页"], ["modules", "模块"], ["defaultDoc", "默认文档"],
            ["browse", "目录浏览"], ["filter", "请求筛选"], ["log", "日志"], ["auth", "身份验证"],
            ["cache", "输出缓存"], ["compress", "压缩"],
        ],
    },
    {
        name: "管理",
        items: [["permissions", "IIS 管理器权\n限"], ["editor", "配置编辑器"]],
    },
]

const siteActions = [
    { icon: "explore", text: "浏览" }, { text: "编辑权限..." }, "-",
    { text: "编辑网站", title: true }, { text: "绑定..." }, { icon: "settings", text: "基本设置..." }, "-",
    { text: "查看应用程序" }, { text: "查看虚拟目录" }, "-",
    { sub: "管理网站" },
    { icon: "restart", text: "重新启动" }, { icon: "play", text: "启动", dim: true }, { icon: "stop", text: "停止" }, "-",
    { text: "浏览网站", title: true }, { icon: "browser", text: "浏览 *:80 (http)" }, "-",
    { text: "高级设置..." }, "-",
    { text: "配置", title: true }, { text: "限制..." }, { text: "HSTS..." }, "-",
    { text: "添加 FTP 发布..." }, "-",
    { icon: "help", text: "帮助" },
]

function Feature({ icon, text, marked }) {
    return (
        <Item>
            <svg width="32" height="32" viewBox="0 0 32 32">{drawings[icon]}</svg>
            <Caption>{text}</Caption>
            {marked && <Highlight />}
        </Item>
    )
}

function ActionEntry({ entry }) {
    if (entry === "-") return <Separator />
    if (entry.sub) {
        return (
            <SubHead>
                {entry.sub}
                <svg width="16" height="16" viewBox="0 0 16 16">
                    <circle cx="8" cy="8" r="7.300" fill="#f1f1f1" stroke="#8c8c8c" />
                    <path d="m5 9.500 3-3 3 3" fill="none" stroke="#222" strokeWidth="1.700" />
                </svg>
            </SubHead>
        )
    }
    return (
        <Action $title={entry.title} $dim={entry.dim}>
            <ActionIcon>{entry.icon && <Small name={entry.icon} />}</ActionIcon>
            {entry.text}
        </Action>
    )
}

function Twig({ w, dots, chevron, open }) {
    return (
        <svg width={w} height="20">
            <path d={dots} fill="none" stroke="#8a8a8a" strokeDasharray="1 1" shapeRendering="crispEdges" />
            {chevron && (
                <path
                    d={open ? `M${chevron - 4} 8l4 4 4-4` : `M${chevron - 2} 6l4 4-4 4`}
                    fill="none" stroke={open ? "#404040" : "#a6a6a6"} strokeWidth="1.500"
                />
            )}
        </svg>
    )
}

function App() {
    return (
        <Frame>
            <GlobalStyle />
            <Defs />
            <TitleBar>
                <Small name="start" />
                <Title>Internet Information Services (IIS)管理器</Title>
                <WindowButtons>
                    <svg width="11" height="11"><path d="M0 5.500h10" stroke="#000" /></svg>
                    <svg width="11" height="11"><path d="M.5.5h10v10H.5z" fill="none" stroke="#000" /></svg>
                    <svg width="11" height="11"><path d="m.5.5 10 10m0-10-10 10" stroke="#000" /></svg>
                </WindowButtons>
            </TitleBar>

            <AddressBar>
                <svg width="55" height="29" viewBox="0 0 55 29">
                    <path d="M0 14C0 7 5 2 12 2c6 0 9 2 15 2s9-2 15-2c7 0 12 5 12 12s-5 13-12 13H12C5 27 0 21 0 14z" fill="#b4c9de" />
                    <path d="M1 20c2 5 6 7 11 7h30c5 0 9-2 11-7" fill="none" stroke="#cfe0f0" strokeWidth="1.500" />
                    <path d="M0 15C0 7 5 2 12 2c6 0 9 2 15 2s9-2 15-2c5 0 9 2 11 6" fill="none" stroke="#94aac1" strokeWidth="1.300" />
                    <path d="M5 14.500h12M10 9.500l-5 5 5 5M37 14.500h12M44 9.500l5 5-5 5" fill="none" stroke="#8795a4" strokeWidth="1.800" />
                </svg>
                <Address>
                    <Small name="globe" />
                    <Gap $w={7} />
                    <Crumb />
                    <Place $w={99}>iZsgzu97b05sarZ</Place>
                    <Crumb />
                    <Place $w={24}>网站</Place>
                    <Crumb />
                    <Place $w={97}>Default Web Site</Place>
                    <Crumb />
                </Address>
                <BarIcons>
                    <Small name="refresh" />
                    <Small name="stopLoad" />
                    <Small name="home" />
                    <BarDivider />
                    <Small name="help" />
                    <Caret />
                </BarIcons>
            </AddressBar>

            <MenuBar>
                <span>文件(<u>F</u>)</span>
                <span>视图(<u>V</u>)</span>
                <span>帮助(<u>H</u>)</span>
            </MenuBar>

            <Body>
                <Connections>
                    <PanelTitle $bg="#bab8bb">连接</PanelTitle>
                    <ConnectionTools>
                        <Small name="connect" />
                        <Gap $w={2} />
                        <Caret />
                        <Gap $w={7} />
                        <Small name="save" />
                        <ToolDivider />
                        <Small name="up" />
                        <ToolDivider $ml={8} />
                        <Small name="disconnect" />
                    </ConnectionTools>
                    <Tree>
                        <TreeRow>
                            <Twig w={21} dots="M10.500 10v10M10 10.500h10" />
                            <TreeLabel $gap={4}><Small name="start" />起始页</TreeLabel>
                        </TreeRow>
                        <TreeRow>
                            <Twig w={21} dots="M17 10.500h4" chevron={9.5} open />
                            <TreeLabel $gap={4}><Small name="server" />iZsgzu97b05sarZ (IZSGZU9</TreeLabel>
                        </TreeRow>
                        <TreeRow>
                            <Twig w={39} dots="M29.500 0v20M30 10.500h9" />
                            <TreeLabel><Small name="pool" />应用程序池</TreeLabel>
                        </TreeRow>
                        <TreeRow>
                            <Twig w={39} dots="M29.500 0v5M37 10.500h2" chevron={28.5} open />
                            <TreeLabel><Small name="sites" />网站</TreeLabel>
                        </TreeRow>
                        <TreeRow>
                            <Twig w={58} dots="M48.500 0v2M55 10.500h3" chevron={47} />
                            <TreeLabel $active><Small name="globe" />Default Web Site</TreeLabel>
                        </TreeRow>
                    </Tree>
                    <ScrollBar>
                        <svg width="6" height="9"><path d="M5 .5 1 4.500l4 4" fill="none" stroke="#444" strokeWidth="1.700" /></svg>
                        <Thumb />
                        <svg width="6" height="9"><path d="m1 .5 4 4-4 4" fill="none" stroke="#444" strokeWidth="1.700" /></svg>
                    </ScrollBar>
                </Connections>

                <Center>
                    <Home>
                        <HomeHead>
                            <svg width="32" height="32" viewBox="0 0 32 32">
                                <ellipse cx="18" cy="28" rx="11" ry="3.500" fill="#000" opacity=".2" />
                                <At x={.5} y={1} s={1.85}><GlobeShape /></At>
                            </svg>
                            <HeadText>Default Web Site 主页</HeadText>
                        </HomeHead>
                        <Features>
                            <FilterBar>
                                <BarText>筛选:</BarText>
                                <Combo $w={121} $ml={7}><span /><Caret /></Combo>
                                <Gap $w={4} />
                                <Small name="funnel" />
                                <Gap $w={2} />
                                <BarText $dim>开始(<u>G</u>)</BarText>
                                <Gap $w={12} />
                                <Caret color="#999" />
                                <Gap $w={4} />
                                <Small name="showAll" />
                                <Gap $w={4} />
                                <BarText>全部显示(<u>A</u>)</BarText>
                                <ToolDivider $h={19} $ml={12} />
                                <BarText>分组依据:</BarText>
                                <Combo $w={115} $ml={6}>区域<Caret /></Combo>
                                <Gap $w={3} />
                                <Small name="views" />
                                <Gap $w={2} />
                                <Caret />
                            </FilterBar>
                            {groups.map(group => (
                                <Group key={group.name}>
                                    <GroupHead>
                                        {group.name}
                                        <Rule />
                                        <svg width="9" height="6" viewBox="0 0 9 6"><path d="m1 5 3.500-3.500L8 5" fill="none" stroke="#0a36a0" strokeWidth="2" /></svg>
                                    </GroupHead>
                                    <Grid>
                                        {group.items.map(([icon, text, marked]) => (
                                            <Feature key={text} icon={icon} text={text} marked={marked} />
                                        ))}
                                    </Grid>
                                </Group>
                            ))}
                        </Features>
                    </Home>
                    <Tabs>
                        <Tab $active><Small name="featuresView" />功能视图</Tab>
                        <Tab><Small name="contentView" />内容视图</Tab>
                    </Tabs>
                </Center>

                <Actions>
                    <PanelTitle $bg="#bababa">操作</PanelTitle>
                    <ActionList>
                        {siteActions.map((entry, i) => <ActionEntry key={i} entry={entry} />)}
                    </ActionList>
                </Actions>
            </Body>

            <StatusBar>
                就绪
                <svg width="24" height="18" viewBox="0 0 24 18">
                    {smallDrawings.server}
                    <path d="M22 9v9M19 12v6M16 15v3" stroke="#9b9b9b" strokeWidth="2" strokeDasharray="2 1" />
                </svg>
            </StatusBar>
        </Frame>
    )
}

export default App
